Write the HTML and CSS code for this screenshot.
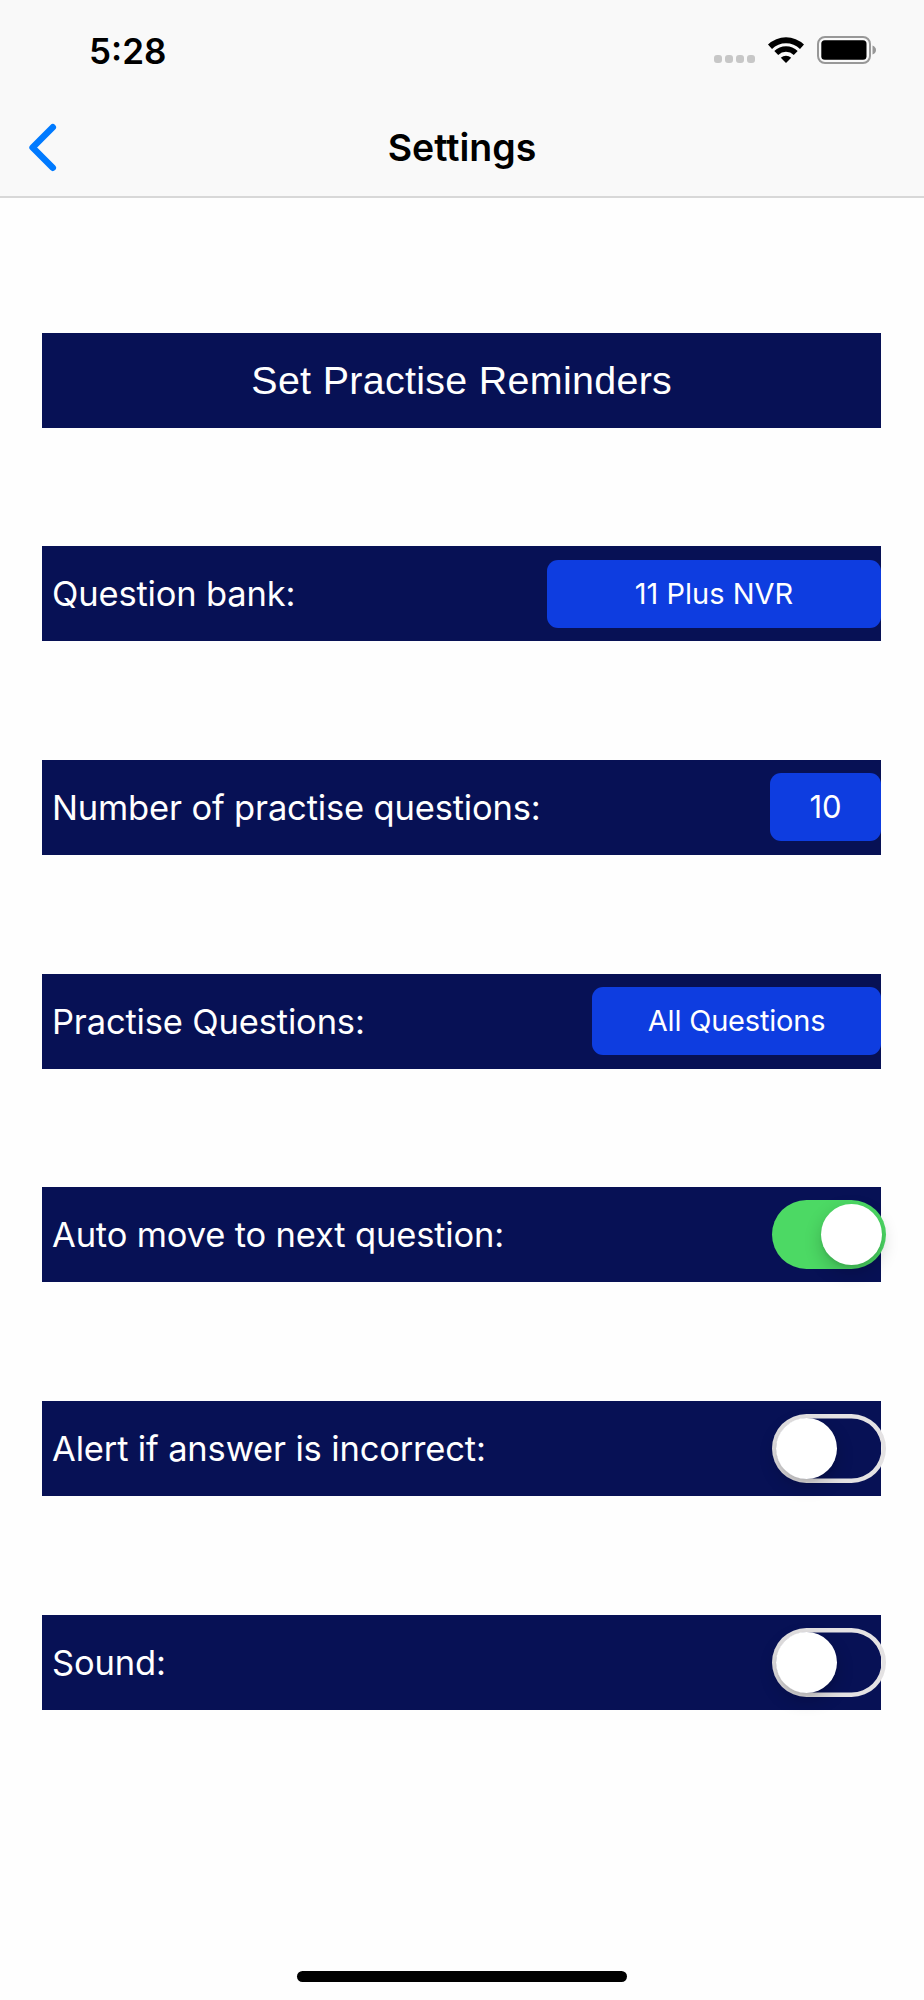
FILE: index.html
```html
<!DOCTYPE html>
<html lang="en">
<head>
    <meta charset="UTF-8">
    <meta name="viewport" content="width=device-width, initial-scale=1.0">
    <title>Settings</title>
    <link rel="stylesheet" href="styles.css">
</head>
<body>
    <header class="header">
        <div class="status-bar">
            <span class="time">5:28</span>
            <div class="status-icons">
                <div class="signal"><i></i><i></i><i></i><i></i></div>
                <svg class="wifi" width="38" height="28" viewBox="0 0 38 28">
                    <path d="M1 8.5A26 26 0 0 1 37 8.5L33 13A20 20 0 0 0 5 13Z"/>
                    <path d="M7.3 15A17 17 0 0 1 30.7 15L26.8 18.9A11.5 11.5 0 0 0 11.2 18.9Z"/>
                    <path d="M13.8 21.7A8 8 0 0 1 24.2 21.7L19 27Z"/>
                </svg>
                <svg class="battery" width="60" height="28" viewBox="0 0 60 28">
                    <rect x="1" y="1" width="52" height="26" rx="7" fill="none" stroke="#989898" stroke-width="2"/>
                    <rect x="4.3" y="4.3" width="45.2" height="19.4" rx="3.5"/>
                    <path d="M55.5 9.5Q59 11 59 14T55.5 18.5Z" fill="#989898"/>
                </svg>
            </div>
        </div>
        <div class="nav-bar">
            <svg class="back" width="30" height="50" viewBox="0 0 30 50">
                <path d="M24.8 5.3L4.6 25.5L24.8 45.7"/>
            </svg>
            <h1>Settings</h1>
        </div>
    </header>

    <main class="settings">
        <button class="row reminders">Set Practise Reminders</button>
        <div class="row">
            <span class="label">Question bank:</span>
            <button class="picker bank">11 Plus NVR</button>
        </div>
        <div class="row">
            <span class="label">Number of practise questions:</span>
            <button class="picker number">10</button>
        </div>
        <div class="row">
            <span class="label">Practise Questions:</span>
            <button class="picker questions">All Questions</button>
        </div>
        <div class="row">
            <span class="label">Auto move to next question:</span>
            <div class="switch on"><div class="knob"></div></div>
        </div>
        <div class="row">
            <span class="label">Alert if answer is incorrect:</span>
            <div class="switch"><div class="knob"></div></div>
        </div>
        <div class="row">
            <span class="label">Sound:</span>
            <div class="switch"><div class="knob"></div></div>
        </div>
    </main>

    <div class="home-indicator"></div>
</body>
</html>
```

FILE: styles.css
```css
* {
    box-sizing: border-box;
}
body {
    display: flex;
    flex-direction: column;
    height: 2000px;
    margin: 0;
    background: #fefefe;
    font-family: Inter, "Liberation Sans", sans-serif;
    color: #000;
}
button {
    padding: 0;
    border: none;
    color: white;
    font-family: inherit;
}
.header {
    height: 198px;
    background: #f9f9f9;
    border-bottom: 2px solid #d8d8d8;
}
.status-bar {
    display: flex;
    justify-content: space-between;
    height: 98px;
    padding: 28px 47px 0 89px;
}
.time {
    font-size: 35px;
    font-weight: 600;
    line-height: 46px;
}
.status-icons {
    display: flex;
    align-items: flex-start;
    padding-top: 8px;
}
.signal {
    display: flex;
    gap: 3px;
    margin: 19px 12px 0 0;
}
.signal i {
    width: 8px;
    height: 8px;
    border-radius: 3px;
    background: #c7c7c7;
}
.wifi {
    margin-right: 12px;
}
.nav-bar {
    display: grid;
    grid-template-columns: 60px 1fr 60px;
    align-items: center;
    height: 98px;
    padding: 0 28px;
}
.back path {
    fill: none;
    stroke: #007aff;
    stroke-width: 6.5;
    stroke-linecap: round;
    stroke-linejoin: round;
}
h1 {
    margin: 0;
    font-size: 37.5px;
    font-weight: 600;
    text-align: center;
}
.settings {
    display: flex;
    flex-direction: column;
    gap: 118.7px;
    padding: 134.6px 43px 0 42.4px;
}
.row {
    display: flex;
    align-items: center;
    justify-content: space-between;
    height: 95px;
    padding-left: 9.6px;
    background: #071155;
    color: white;
}
.reminders {
    justify-content: center;
    padding: 0;
    font-family: "Liberation Sans", Arial, sans-serif;
    font-size: 39.4px;
    letter-spacing: 0.32px;
}
.label {
    font-size: 34.5px;
    letter-spacing: -0.16px;
    white-space: nowrap;
}
.picker {
    height: 68px;
    padding-bottom: 1px;
    border-radius: 11px;
    background: #0e3de0;
    font-size: 29px;
}
.bank {
    width: 334px;
}
.number {
    width: 111px;
    font-size: 31px;
}
.questions {
    width: 289px;
    letter-spacing: -0.2px;
}
.switch {
    width: 114px;
    height: 69px;
    margin-right: -5px;
    padding: 4px;
    border-radius: 35px;
    box-shadow: inset 0 0 0 4.5px #e4e2e3;
}
.knob {
    width: 61px;
    height: 61px;
    border-radius: 50%;
    background: white;
    box-shadow: 0 7px 18px rgba(0, 0, 0, 0.2), 0 3px 3px rgba(0, 0, 0, 0.06);
}
.on {
    background: #4cd964;
    box-shadow: none;
}
.on .knob {
    margin-left: 45px;
}
.home-indicator {
    width: 330px;
    height: 11px;
    margin: auto auto 18px;
    border-radius: 6px;
    background: #000;
}
```
